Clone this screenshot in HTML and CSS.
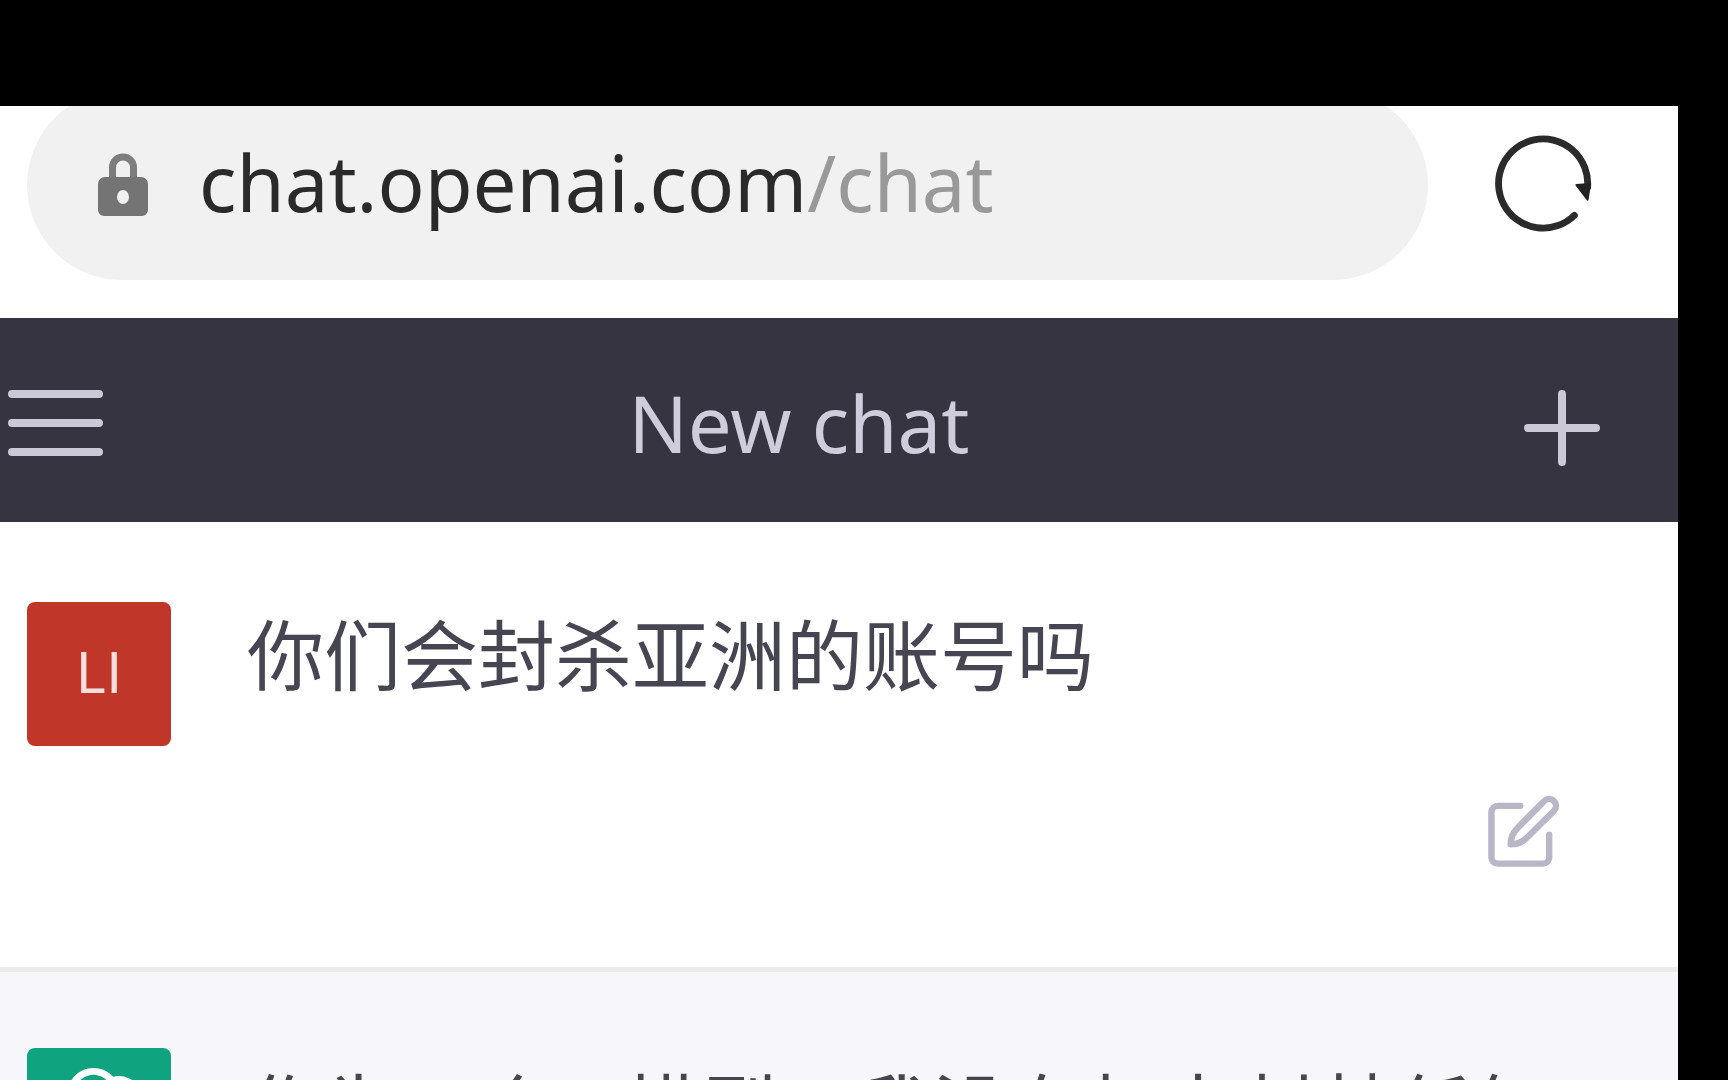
FILE: index.html
```html
<!DOCTYPE html>
<html lang="zh-CN">
<head>
<meta charset="utf-8">
<title>New chat</title>
<link rel="stylesheet" href="styles.css">
</head>
<body>
<div class="screen">
  <div class="browser-bar">
    <a class="address" href="#">
      <svg class="lock" viewBox="0 0 50 64" aria-hidden="true">
        <path d="M14.500 28V14.500a10.500 10.500 0 0 1 21 0V28" fill="none" stroke="#7d7d7d" stroke-width="7"/>
        <path fill-rule="evenodd" fill="#747474" d="M7 24h36a7 7 0 0 1 7 7v26a6 6 0 0 1-6 6H6a6 6 0 0 1-6-6V31a7 7 0 0 1 7-7zM25 37a6 7 0 0 0 0 14a6 7 0 0 0 0-14z"/>
      </svg>
      <span class="url">chat.openai.com<span class="path">/chat</span></span>
    </a>
    <button class="reload" aria-label="Reload">
      <svg viewBox="0 0 100 100" aria-hidden="true">
        <path d="M82 83A45.500 45.500 0 1 1 95.500 54" fill="none" stroke="#2b2b2b" stroke-width="7" stroke-linecap="round"/>
        <path d="M84 52L98 51L95.500 67Z" fill="#222" stroke="#222" stroke-width="2" stroke-linejoin="round"/>
      </svg>
    </button>
  </div>
  <header class="topbar">
    <button class="menu" aria-label="Open sidebar">
      <svg viewBox="0 0 96 66" aria-hidden="true"><path d="M4 4h87M4 33h87M4 62h87"/></svg>
    </button>
    <h1 class="title">New chat</h1>
    <button class="new" aria-label="New chat">
      <svg viewBox="0 0 76 76" aria-hidden="true"><path d="M38 4v68M4 38h68"/></svg>
    </button>
  </header>
  <main class="thread">
    <article class="message">
      <div class="avatar user">LI</div>
      <p class="text">你们会封杀亚洲的账号吗</p>
      <button class="edit" aria-label="Edit">
        <svg viewBox="0 0 24 24" aria-hidden="true"><path d="M11 4H4a2 2 0 0 0-2 2v14a2 2 0 0 0 2 2h14a2 2 0 0 0 2-2v-7"/><path d="M18.500 2.500a2.121 2.121 0 0 1 3 3L13.200 13.800C11.800 15.200 10.500 16 8 16C8 13.500 8.800 12.200 10.200 10.800z"/></svg>
      </button>
    </article>
    <article class="message reply">
      <div class="avatar bot">
        <svg viewBox="0 0 24 24" aria-hidden="true"><path d="M22.2819 9.8211a5.9847 5.9847 0 0 0-.5157-4.9108 6.0462 6.0462 0 0 0-6.5098-2.9A6.0651 6.0651 0 0 0 4.9807 4.1818a5.9847 5.9847 0 0 0-3.9977 2.9 6.0462 6.0462 0 0 0 .7427 7.0966 5.98 5.98 0 0 0 .511 4.9107 6.051 6.051 0 0 0 6.5146 2.9001A5.9847 5.9847 0 0 0 13.2599 24a6.0557 6.0557 0 0 0 5.7718-4.2058 5.9894 5.9894 0 0 0 3.9977-2.9001 6.0557 6.0557 0 0 0-.7475-7.0729zm-9.022 12.6081a4.4755 4.4755 0 0 1-2.8764-1.0408l.1419-.0804 4.7783-2.7582a.7948.7948 0 0 0 .3927-.6813v-6.7369l2.02 1.1686a.071.071 0 0 1 .038.052v5.5826a4.504 4.504 0 0 1-4.4945 4.4944zm-9.6607-4.1254a4.4708 4.4708 0 0 1-.5346-3.0137l.142.0852 4.783 2.7582a.7712.7712 0 0 0 .7806 0l5.8428-3.3685v2.3324a.0804.0804 0 0 1-.0332.0615L9.74 19.9502a4.4992 4.4992 0 0 1-6.1408-1.6464zM2.3408 7.8956a4.485 4.485 0 0 1 2.3655-1.9728V11.6a.7664.7664 0 0 0 .3879.6765l5.8144 3.3543-2.0201 1.1685a.0757.0757 0 0 1-.071 0l-4.8303-2.7865A4.504 4.504 0 0 1 2.3408 7.872zm16.5963 3.8558L13.1038 8.364 15.1192 7.2a.0757.0757 0 0 1 .071 0l4.8303 2.7913a4.4944 4.4944 0 0 1-.6765 8.1042v-5.6772a.79.79 0 0 0-.407-.667zm2.0107-3.0231l-.142-.0852-4.7735-2.7818a.7759.7759 0 0 0-.7854 0L9.409 9.2297V6.8974a.0662.0662 0 0 1 .0284-.0615l4.8303-2.7866a4.4992 4.4992 0 0 1 6.6802 4.66zM8.3065 12.863l-2.02-1.1638a.0804.0804 0 0 1-.038-.0567V6.0742a4.4992 4.4992 0 0 1 7.3757-3.4537l-.142.0805L8.704 5.459a.7948.7948 0 0 0-.3927.6813zm1.0976-2.3654l2.602-1.4998 2.6069 1.4998v2.9994l-2.5974 1.4997-2.6067-1.4997Z"/></svg>
      </div>
      <p class="text">作为一个AI模型，我没有权力封禁任何</p>
    </article>
  </main>
</div>
</body>
</html>
```
FILE: styles.css
```css
* { box-sizing: border-box; }

body {
  margin: 0;
  height: 100vh;
  padding: 106px 50px 0 0;
  overflow: hidden;
  background: #000;
  font-family: "Noto Sans", "Noto Sans CJK SC", sans-serif;
}

button {
  padding: 0;
  border: 0;
  background: none;
  color: inherit;
  font: inherit;
}

svg { display: block; }

.screen {
  display: flex;
  flex-direction: column;
  height: 100%;
  overflow: hidden;
  background: #fff;
}

.browser-bar {
  display: flex;
  flex: none;
  align-items: center;
  gap: 66px;
  height: 212px;
  padding: 0 86px 54px 27px;
}

/* The pill reaches above the visible edge and is clipped there. */
.address {
  display: flex;
  flex: 1;
  align-items: center;
  gap: 51px;
  height: 190px;
  padding-left: 71px;
  border-radius: 95px;
  background: #f1f1f1;
  color: #2a2a2a;
  text-decoration: none;
}

.lock { width: 50px; height: 64px; }

.url {
  padding-bottom: 6px;
  font-size: 78px;
  line-height: 106px;
}

.path { color: #999; }

.reload { padding-bottom: 4px; }

.reload svg { width: 98px; height: 98px; }

.topbar {
  display: flex;
  flex: none;
  align-items: center;
  height: 204px;
  padding: 6px 40px 0 0;
  background: #363440;
  color: #cfcddb;
}

.topbar path {
  fill: none;
  stroke: #cbc9d7;
  stroke-width: 8;
  stroke-linecap: round;
}

.menu {
  width: 112px;
  padding-left: 8px;
}

.menu svg { width: 96px; height: 66px; }

.new {
  display: grid;
  place-items: center;
  width: 152px;
  padding-top: 10px;
}

.new svg { width: 76px; height: 76px; }

.title {
  flex: 1;
  margin: 0;
  font-size: 78px;
  font-weight: 400;
  line-height: 106px;
  text-align: center;
}

.message {
  display: grid;
  grid-template-columns: 144px 1fr;
  column-gap: 76px;
  padding: 80px 116px 97px 27px;
  border-bottom: 5px solid #ebebeb;
}

.reply {
  padding-top: 76px;
  background: #f7f7fb;
}

.avatar {
  display: grid;
  place-items: center;
  width: 144px;
  height: 144px;
  border-radius: 8px;
}

.user {
  padding-bottom: 10px;
  background: #c0372a;
  color: #f3e0de;
  font-family: "Noto Sans CJK SC", sans-serif;
  font-size: 56px;
  line-height: 80px;
}

.bot { background: #10a37f; }

.bot svg {
  width: 104px;
  height: 104px;
  fill: #fff;
}

.text {
  margin: 0;
  color: #464552;
  font-family: "Noto Sans CJK SC", sans-serif;
  font-size: 77px;
  line-height: 100px;
}

.reply .text { padding-top: 8px; }

.edit {
  grid-column: 2;
  justify-self: end;
  margin-top: 47px;
}

.edit svg {
  width: 77px;
  height: 77px;
  fill: none;
  stroke: #b9b6c7;
  stroke-width: 2;
  stroke-linecap: round;
  stroke-linejoin: round;
}
```
